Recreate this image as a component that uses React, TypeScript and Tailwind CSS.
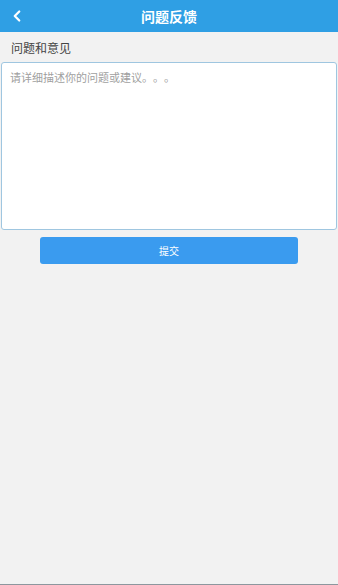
import { ChevronLeft } from 'lucide-react'

export default function App() {
  return (
    <div
      className="flex h-[585px] w-[338px] flex-col bg-[#f2f2f2]"
      style={{ fontFamily: '"Noto Sans CJK SC", "Liberation Sans", sans-serif' }}
    >
      <div className="relative flex h-[32px] items-center justify-center bg-[#2f9fe4]">
        <ChevronLeft className="absolute left-[8px] top-[7px] text-white" size={18} strokeWidth={3} />
        <div className="text-[14px] font-bold text-white">问题反馈</div>
      </div>
      <div className="px-[11px] pt-[8px] pb-[6px] text-[12px] leading-[16px] text-[#444]">问题和意见</div>
      <textarea
        className="mx-[1px] h-[168px] resize-none rounded-[3px] border border-[#9fc6e0] bg-white px-[8px] py-[6px] text-[11px] leading-[16px] text-[#333] outline-none [text-spacing-trim:space-all] placeholder:text-[#a0a0a0]"
        placeholder="请详细描述你的问题或建议。。。"
      />
      <div className="flex justify-center pt-[7px]">
        <button className="h-[27px] w-[258px] rounded-[3px] bg-[#3a9bef] text-[10px] text-white">提交</button>
      </div>
      <div className="flex-1" />
      <div className="h-[1px] bg-[#8d979e]" />
    </div>
  )
}
